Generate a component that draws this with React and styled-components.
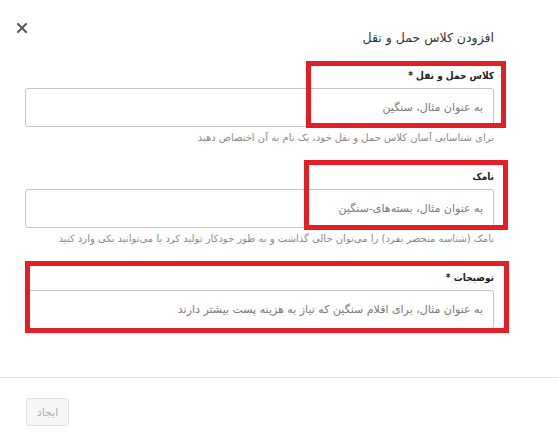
import React from "react";
import styled, { createGlobalStyle } from "styled-components";

const GlobalStyle = createGlobalStyle`
  html, body {
    margin: 0;
    padding: 0;
    background: #ffffff;
  }
  body {
    font-family: Tahoma, "DejaVu Sans", "Noto Sans", sans-serif;
  }
`;

const fields = [
  {
    label: "کلاس حمل و نقل",
    required: true,
    placeholder: "به عنوان مثال، سنگین",
    help: "برای شناسایی آسان کلاس حمل و نقل خود، یک نام به آن اختصاص دهید",
    mark: { top: -7, right: -12, width: 200, height: 67 },
  },
  {
    label: "نامک",
    required: false,
    placeholder: "به عنوان مثال، بسته‌های-سنگین",
    help: "نامک (شناسه منحصر بفرد) را می‌توان خالی گذاشت و به طور خودکار تولید کرد یا می‌توانید یکی وارد کنید",
    mark: { top: -9, right: -14, width: 204, height: 70 },
  },
  {
    label: "توضیحات",
    required: true,
    placeholder: "به عنوان مثال، برای اقلام سنگین که نیاز به هزینه پست بیشتر دارند",
    help: null,
    mark: { top: -9, right: -15, width: 484, height: 72 },
  },
];

const App = () => {
  return (
    <>
      <GlobalStyle />
      <Dialog dir="rtl">
        <Header>
          <Title>افزودن کلاس حمل و نقل</Title>
          <CloseButton aria-label="بستن">
            <svg width="10" height="10" viewBox="0 0 10 10">
              <path
                d="M1 1 L9 9 M9 1 L1 9"
                stroke="#555"
                strokeWidth="2"
                strokeLinecap="square"
              />
            </svg>
          </CloseButton>
        </Header>
        <Body>
          {fields.map((f) => (
            <Field key={f.label}>
              <Label>
                {f.label}
                {f.required && " *"}
              </Label>
              <Input placeholder={f.placeholder} />
              {f.help && <Help>{f.help}</Help>}
              <Highlight
                $top={f.mark.top}
                $right={f.mark.right}
                $w={f.mark.width}
                $h={f.mark.height}
              />
            </Field>
          ))}
        </Body>
        <Footer>
          <SubmitButton disabled>ایجاد</SubmitButton>
        </Footer>
      </Dialog>
    </>
  );
};

export default App;

const Dialog = styled.div`
  width: 559px;
  height: 444px;
  background: #fff;
  display: flex;
  flex-direction: column;
  overflow: hidden;
`;

const Header = styled.div`
  display: flex;
  align-items: flex-start;
  justify-content: space-between;
  padding: 23px 65px 0 17px;
  height: 25px;
`;

const Title = styled.h2`
  margin: 5px 0 0 0;
  font-size: 12.5px;
  font-weight: normal;
  color: #333;
  line-height: 20px;
`;

const CloseButton = styled.button`
  border: none;
  background: transparent;
  padding: 0;
  width: 10px;
  height: 10px;
  display: flex;
  cursor: pointer;
`;

const Body = styled.div`
  display: flex;
  flex-direction: column;
  gap: 24px;
  padding: 20px 65px 0 25px;
`;

const Field = styled.div`
  position: relative;
  display: flex;
  flex-direction: column;
`;

const Label = styled.label`
  font-family: "DejaVu Sans Condensed", "DejaVu Sans", sans-serif;
  font-size: 10px;
  font-weight: bold;
  color: #222;
  line-height: 16px;
  margin-bottom: 4px;
`;

const Input = styled.input`
  box-sizing: border-box;
  height: 39px;
  width: 100%;
  border: 1px solid #c4c4c4;
  border-radius: 3px;
  padding: 0 10px;
  font-family: inherit;
  font-size: 11px;
  color: #333;
  direction: rtl;
  &::placeholder {
    color: #777;
  }
`;

const Help = styled.p`
  margin: 4px 0 0 0;
  font-size: 10px;
  line-height: 14px;
  color: #888;
  white-space: nowrap;
`;

const Highlight = styled.div`
  position: absolute;
  top: ${(p) => p.$top}px;
  right: ${(p) => p.$right}px;
  width: ${(p) => p.$w}px;
  height: ${(p) => p.$h}px;
  box-sizing: border-box;
  border: 5px solid #e31e25;
  pointer-events: none;
`;

const Footer = styled.div`
  margin-top: auto;
  border-top: 1px solid #e5e5e5;
  height: 67px;
  display: flex;
  align-items: flex-start;
  padding: 20px 26px 0;
  box-sizing: border-box;
  direction: ltr;
`;

const SubmitButton = styled.button`
  height: 28px;
  width: 43px;
  padding: 0;
  background: #f6f6f6;
  border: 1px solid #e0e0e0;
  border-radius: 3px;
  color: #b0b0b0;
  font-family: inherit;
  font-size: 11px;
`;
